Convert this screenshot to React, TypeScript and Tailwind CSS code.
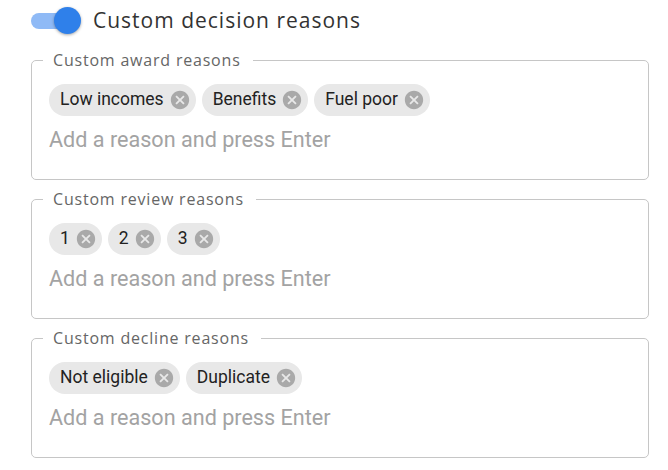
import React from "react";

type Group = { label: string; chips: string[] };

const groups: Group[] = [
  { label: "Custom award reasons", chips: ["Low incomes", "Benefits", "Fuel poor"] },
  { label: "Custom review reasons", chips: ["1", "2", "3"] },
  { label: "Custom decline reasons", chips: ["Not eligible", "Duplicate"] },
];

const CancelIcon = () => (
  <svg viewBox="0 0 24 24" className="w-[22px] h-[22px] fill-[#a9a9a9] -ml-[6px] mr-[5px] shrink-0">
    <path d="M12 2C6.47 2 2 6.47 2 12s4.47 10 10 10 10-4.47 10-10S17.53 2 12 2zm5 13.59L15.59 17 12 13.41 8.41 17 7 15.59 10.59 12 7 8.41 8.41 7 12 10.59 15.59 7 17 8.41 13.41 12 17 15.59z" />
  </svg>
);

const Chip = ({ text }: { text: string }) => (
  <div className="flex items-center h-[32px] rounded-full bg-[#e8e8e8]">
    <span className="pl-[11px] pr-[11px] text-[17.5px] text-[#222] leading-none">{text}</span>
    <CancelIcon />
  </div>
);

const ReasonBox = ({ group }: { group: Group }) => (
  <fieldset className="w-[618px] border border-[#c6c6c6] rounded-[5px] px-[17px] pb-[25px]">
    <legend className="-ml-[6px] pl-[10px] pr-[12px] text-[16px] tracking-[0.8px] leading-[20px] text-[#666] font-['Open_Sans',sans-serif]">
      {group.label}
    </legend>
    <div className="flex gap-[6px] mt-[14px]">
      {group.chips.map((c) => (
        <Chip key={c} text={c} />
      ))}
    </div>
    <div className="mt-[10px] text-[21.6px] leading-[28px] text-[#a3a3a3]">Add a reason and press Enter</div>
  </fieldset>
);

export default function App() {
  return (
    <div className="min-h-screen bg-white pl-[31px] font-['Roboto',sans-serif]">
      <div className="flex items-center h-[42px]">
        <div className="relative w-[62px] h-[28px] shrink-0">
          <div className="absolute left-0 top-[6px] w-[48px] h-[16px] rounded-full bg-[#8fbaf6]" />
          <div className="absolute left-[23px] top-0 w-[27px] h-[27px] rounded-full bg-[#2f80ea] shadow-[0_1px_3px_rgba(0,0,0,0.35)]" />
        </div>
        <h1 className="text-[21px] tracking-[1px] text-[#333] font-['Open_Sans',sans-serif]">Custom decision reasons</h1>
      </div>
      <div className="flex flex-col gap-[9px] mt-[8px]">
        {groups.map((g) => (
          <ReasonBox key={g.label} group={g} />
        ))}
      </div>
    </div>
  );
}
